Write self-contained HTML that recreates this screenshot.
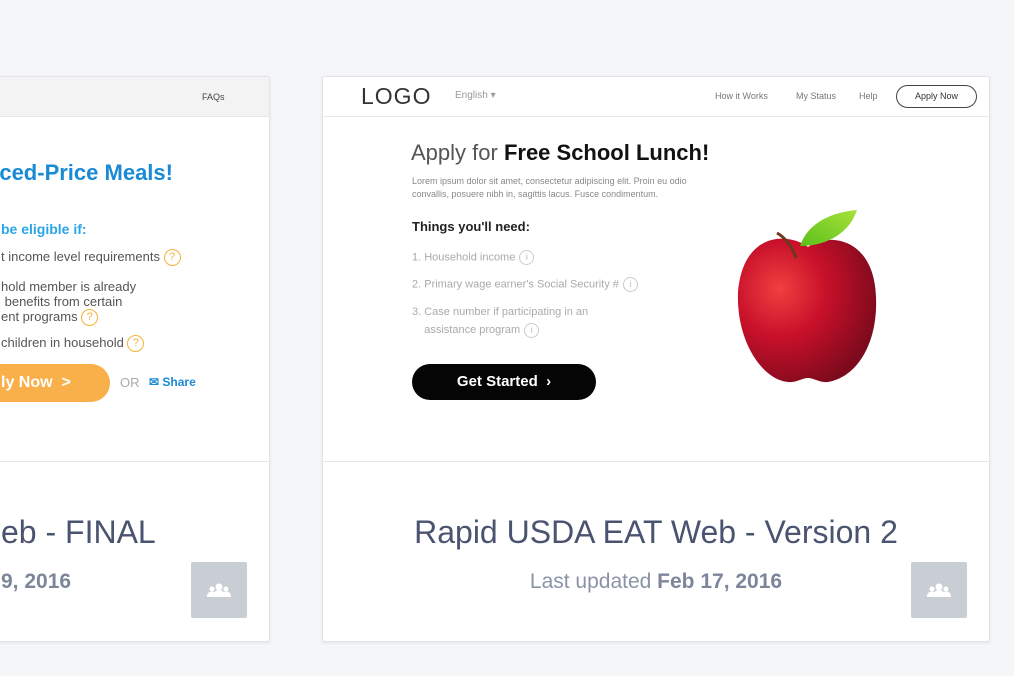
<!DOCTYPE html>
<html><head><meta charset="utf-8"><style>
*{margin:0;padding:0;box-sizing:border-box}
body{width:1014px;height:676px;background:#f5f6f8;position:relative;overflow:hidden;font-family:"Liberation Sans",sans-serif}
.card{position:absolute;top:76px;height:566px;background:#fff;border:1px solid #e2e4ea;border-radius:3px;box-shadow:0 1px 3px rgba(0,0,0,.08);overflow:hidden}
.shot{position:absolute;left:0;top:0;right:0;height:385px;border-bottom:1px solid #e3e5ea;overflow:hidden}
.abs{position:absolute;white-space:nowrap}
.title{position:absolute;top:437px;font-size:32px;color:#4a5370;white-space:nowrap}
.sub{position:absolute;top:493px;font-size:21px;color:#8a93a6;white-space:nowrap}
.sub b{color:#7c859a}
.ico{position:absolute;width:56px;height:56px;background:#c9ced4;border-radius:2px}
.q{display:inline-block;width:17px;height:17px;border:1.5px solid #f6b13a;border-radius:50%;color:#f6b13a;font-size:11px;text-align:center;line-height:14px;vertical-align:middle}
.i{display:inline-block;width:15px;height:15px;border:1px solid #ccc;border-radius:50%;color:#bbb;font-size:9px;text-align:center;line-height:13px;vertical-align:middle;margin-left:4px}
</style></head><body>

<div class="card" style="left:-20px;width:290px">
 <div class="shot">
  <div class="abs" style="left:0;top:0;width:290px;height:40px;background:#f3f3f3;border-bottom:1px solid #e6e6e6"></div>
  <div class="abs" style="left:221px;top:15px;font-size:9px;color:#444">FAQs</div>
  <div class="abs" style="left:0px;top:83px;font-size:22px;font-weight:bold;color:#1a8ad4">&nbsp;&nbsp;&nbsp;ced-Price Meals!</div>
  <div class="abs" style="left:20px;top:144px;font-size:14px;font-weight:bold;color:#2aa6e8">be eligible if:</div>
  <div class="abs" style="left:20px;top:172px;font-size:13px;color:#555">t income level requirements <span class="q">?</span></div>
  <div class="abs" style="left:20px;top:202px;font-size:13px;color:#555;line-height:15px;white-space:normal;width:200px">hold member is already<br>&nbsp;benefits from certain<br>ent programs <span class="q">?</span></div>
  <div class="abs" style="left:20px;top:258px;font-size:13px;color:#555">children in household <span class="q">?</span></div>
  <div class="abs" style="left:-20px;top:287px;width:149px;height:38px;background:#f9b04a;border-radius:19px;color:#fff;font-size:16px;font-weight:bold;line-height:38px;padding-left:40px">ly Now &nbsp;&gt;</div>
  <div class="abs" style="left:139px;top:298px;font-size:13px;color:#aaa">OR</div>
  <div class="abs" style="left:168px;top:298px;font-size:12px;color:#1a8ad4;font-weight:bold">✉ Share</div>
 </div>
 <div class="title" style="left:20px">eb - FINAL</div>
 <div class="sub" style="left:20px"><b>9, 2016</b></div>
 <div class="ico" style="left:210px;top:485px"><svg width="56" height="56" viewBox="0 0 56 56"><g fill="#fff"><circle cx="28" cy="25" r="3.5"/><path d="M22 35c0-5 3-7 6-7s6 2 6 7z"/><circle cx="21" cy="27" r="2.5"/><path d="M16 35c0-4 2-5.5 5-5.5 1 0 2 .3 2.5 .8-1 1.2-1.5 2.7-1.5 4.7z"/><circle cx="35" cy="27" r="2.5"/><path d="M40 35c0-4-2-5.5-5-5.5-1 0-2 .3-2.5.8 1 1.2 1.5 2.7 1.5 4.7z"/></g></svg></div>
</div>

<div class="card" style="left:322px;width:668px">
 <div class="shot">
  <div class="abs" style="left:0;top:39px;width:668px;height:1px;background:#e8e8e8"></div>
  <div class="abs" style="left:38px;top:6px;font-size:23px;color:#333;letter-spacing:1px">LOGO</div>
  <div class="abs" style="left:132px;top:13px;font-size:10px;color:#999">English ▾</div>
  <div class="abs" style="left:392px;top:14px;font-size:9px;color:#777">How it Works</div>
  <div class="abs" style="left:473px;top:14px;font-size:9px;color:#777">My Status</div>
  <div class="abs" style="left:536px;top:14px;font-size:9px;color:#777">Help</div>
  <div class="abs" style="left:573px;top:8px;width:81px;height:23px;border:1.5px solid #444;border-radius:12px;font-size:9px;color:#333;text-align:center;line-height:20px">Apply Now</div>
  <div class="abs" style="left:88px;top:63px;font-size:22px;color:#555">Apply for <b style="color:#111">Free School Lunch!</b></div>
  <div class="abs" style="left:89px;top:98px;font-size:9px;color:#888;line-height:13px">Lorem ipsum dolor sit amet, consectetur adipiscing elit. Proin eu odio<br>convallis, posuere nibh in, sagittis lacus. Fusce condimentum.</div>
  <div class="abs" style="left:89px;top:142px;font-size:13px;font-weight:bold;color:#222">Things you'll need:</div>
  <div class="abs" style="left:89px;top:173px;font-size:11px;color:#aaa">1. Household income<span class="i">i</span></div>
  <div class="abs" style="left:89px;top:200px;font-size:11px;color:#aaa">2. Primary wage earner's Social Security #<span class="i">i</span></div>
  <div class="abs" style="left:89px;top:226px;font-size:11px;color:#aaa;line-height:18px">3. Case number if participating in an<br>&nbsp;&nbsp;&nbsp;&nbsp;assistance program<span class="i">i</span></div>
  <div class="abs" style="left:89px;top:287px;width:184px;height:36px;background:#050505;border-radius:18px;color:#fff;font-size:15px;font-weight:bold;text-align:center;line-height:36px">Get Started &nbsp;›</div>
  <svg class="abs" style="left:405px;top:125px" width="160" height="190" viewBox="0 0 160 190">
   <defs><radialGradient id="a" cx="30%" cy="35%" r="75%"><stop offset="0" stop-color="#f04040"/><stop offset=".45" stop-color="#c8102a"/><stop offset="1" stop-color="#7a0a1c"/></radialGradient>
   <linearGradient id="l" x1="0" y1="1" x2="1" y2="0"><stop offset="0" stop-color="#5cbf1a"/><stop offset="1" stop-color="#a8e23a"/></linearGradient></defs>
   <path d="M80 45C60 30 15 30 10 90C8 140 35 178 60 180C68 181 74 176 80 176C86 176 92 181 100 180C130 175 150 140 148 95C146 35 100 30 80 45Z" fill="url(#a)"/>
   <path d="M68 56C64 45 58 36 49 31" stroke="#6b3a1e" stroke-width="3" fill="none"/>
   <path d="M72 44C80 20 105 10 129 8C122 30 100 44 72 44Z" fill="url(#l)"/>
  </svg>
 </div>
 <div class="title" style="left:0;width:666px;text-align:center">Rapid USDA EAT Web - Version 2</div>
 <div class="sub" style="left:0;width:666px;text-align:center">Last updated <b>Feb 17, 2016</b></div>
 <div class="ico" style="left:588px;top:485px"><svg width="56" height="56" viewBox="0 0 56 56"><g fill="#fff"><circle cx="28" cy="25" r="3.5"/><path d="M22 35c0-5 3-7 6-7s6 2 6 7z"/><circle cx="21" cy="27" r="2.5"/><path d="M16 35c0-4 2-5.5 5-5.5 1 0 2 .3 2.5 .8-1 1.2-1.5 2.7-1.5 4.7z"/><circle cx="35" cy="27" r="2.5"/><path d="M40 35c0-4-2-5.5-5-5.5-1 0-2 .3-2.5.8 1 1.2 1.5 2.7 1.5 4.7z"/></g></svg></div>
</div>
</body></html>
